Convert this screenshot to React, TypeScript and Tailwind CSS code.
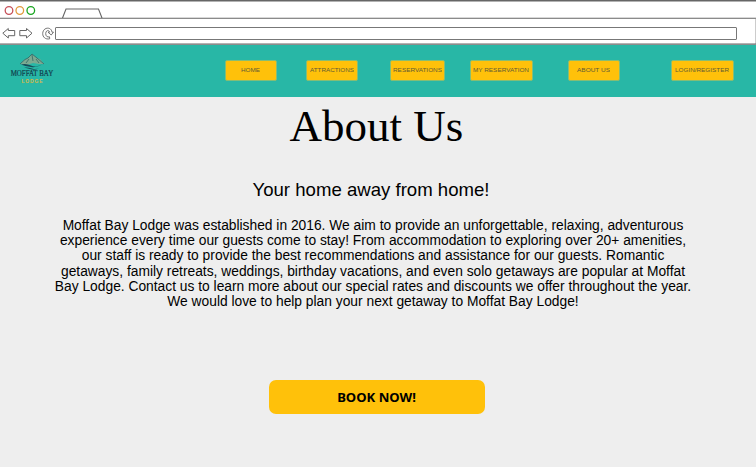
const navItems = [
  { label: "HOME", box: "ml-[225px] w-[52px]", size: 19 },
  { label: "ATTRACTIONS", box: "ml-[29px] w-[52px]", size: 44 },
  { label: "RESERVATIONS", box: "ml-[32px] w-[55px]", size: 49 },
  { label: "MY RESERVATION", box: "ml-[25px] w-[63px]", size: 56 },
  { label: "ABOUT US", box: "ml-[35px] w-[52px]", size: 33 },
  { label: "LOGIN/REGISTER", box: "ml-[51px] w-[63px]", size: 54 },
];

const aboutLines = [
  "Moffat Bay Lodge was established in 2016. We aim to provide an unforgettable, relaxing, adventurous",
  "experience every time our guests come to stay! From accommodation to exploring over 20+ amenities,",
  "our staff is ready to provide the best recommendations and assistance for our guests. Romantic",
  "getaways, family retreats, weddings, birthday vacations, and even solo getaways are popular at Moffat",
  "Bay Lodge. Contact us to learn more about our special rates and discounts we offer throughout the year.",
  "We would love to help plan your next getaway to Moffat Bay Lodge!",
];

function BrowserChrome() {
  return (
    <header className="h-[45px] w-full bg-white">
      <svg width="756" height="45" viewBox="0 0 756 45" fill="none" stroke="#666" strokeWidth="1">
        <path d="M0 .7H756" strokeWidth="1.4" />
        <circle cx="9" cy="10.5" r="3.8" stroke="#c65059" strokeWidth="1.3" />
        <circle cx="19.8" cy="10.5" r="3.8" stroke="#e19a3c" strokeWidth="1.3" />
        <circle cx="30.8" cy="10.5" r="3.8" stroke="#19a51f" strokeWidth="1.3" />
        <path d="M0 18.3H756M62.5 18L66 9H98.5L102 18" strokeWidth="1.1" />
        <path d="M2.8 33.2L8.3 28.5V30.5H14.7V35.7H8.3V38Z" />
        <path d="M32 33.2L26.5 28.5V30.5H19.8V35.7H26.5V38Z" />
        <path d="M49.7 38.8C45.5 39.8 42.6 37 42.7 33.6C42.8 27 51.4 26.2 52 32.2H53.5L51.2 35L48 32.2H49.6C49.2 29.7 45.9 30 45.7 33.5C45.6 36.2 47.5 37.5 49.5 36.8Z" strokeWidth=".9" />
        <rect x="55.5" y="27.5" width="681" height="12" rx="0.5" stroke="#777" />
        <path d="M755.5 19V44" stroke="#ccc" />
        <path d="M0 44.2H756" strokeWidth="1.3" />
      </svg>
    </header>
  );
}

function Logo() {
  return (
    <svg className="absolute left-[8px] top-[6px]" width="48" height="34" viewBox="0 0 48 34">
      <path d="M12 13L16 9L20 7L24 3L29 7L32 8L36 13L31 13L25 12L19 14Z" fill="#7caa91" />
      <path d="M12 13L17 8.5L20 7L24 3L29 7L36 13M18 12L21 8M24 4L25 10M28 8L31 12" fill="none" stroke="#285b60" strokeWidth=".7" />
      <path d="M13 13.5Q18 12 23 14.5T35 13Q29 17 23 16T13 13.5M16 16.5Q20 16 24 17.5T32 16.5Q27 20 22 18Z" fill="#164b58" />
      <text x="2.7" y="25" textLength="42.5" lengthAdjust="spacingAndGlyphs" fill="#123e4d" stroke="#123e4d" strokeWidth=".2" fontFamily="Liberation Serif, serif" fontSize="7.4">MOFFAT BAY</text>
      <text x="13.5" y="31.5" textLength="21" fill="#d6b746" fontFamily="Liberation Sans, sans-serif" fontSize="5" fontWeight="bold">LODGE</text>
    </svg>
  );
}

export default function App() {
  return (
    <div className="h-[467px] w-[756px] overflow-hidden bg-[#eeeeee] font-['Liberation_Sans',sans-serif] text-black">
      <BrowserChrome />
      <nav className="relative flex h-[52px] bg-[#28b7a6] pt-[15px]">
        <Logo />
        {navItems.map(({ label, box, size }) => (
          <button key={label} className={`${box} flex h-[21px] shrink-0 justify-center rounded-[2px] border border-[#85bd75] bg-[#ffc10a] pr-px`}>
            <svg width={size} height="18" className="shrink-0">
              <text x="0" y="11" textLength={size} lengthAdjust="spacingAndGlyphs" fill="#625b35" fontSize="6">{label}</text>
            </svg>
          </button>
        ))}
      </nav>
      <main className="flex flex-col items-center">
        <h1 className="mt-[4px] mr-[3px] h-[51px] whitespace-nowrap font-['Liberation_Serif',serif] text-[45px] leading-[51px]">About Us</h1>
        <h2 className="mt-[26px] mr-[14px] h-[24px] whitespace-nowrap text-[18.6px] leading-[24px]">Your home away from home!</h2>
        <div className="mt-[16px] mr-[10px] flex w-[638px] flex-col items-center text-[13.81px] leading-[15.2px]">
          {aboutLines.map((line) => <p key={line} className="whitespace-nowrap">{line}</p>)}
        </div>
        <button className="mt-[71px] mr-[3px] h-[34px] w-[216px] rounded-[7px] bg-[#ffc10a] pt-px font-['Noto_Sans',sans-serif] text-[13.1px] font-bold">BOOK NOW!</button>
      </main>
    </div>
  );
}
